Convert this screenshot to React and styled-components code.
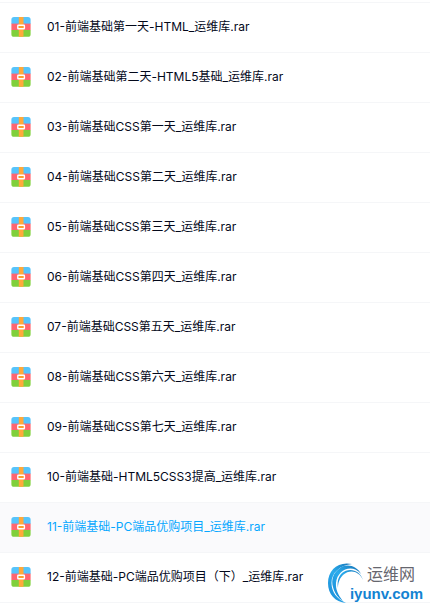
import React from "react";
import styled, { createGlobalStyle } from "styled-components";

const GlobalStyle = createGlobalStyle`
  body {
    margin: 0;
    background: #fff;
    font-family: Inter, "Noto Sans CJK SC", sans-serif;
  }
`;

const Page = styled.main`
  position: relative;
  padding: 2px 0 7px;
`;

const FileList = styled.ul`
  margin: 0;
  padding: 0;
  list-style: none;
  border-top: 1px solid #f5f6f8;
`;

const FileRow = styled.li`
  display: flex;
  align-items: center;
  gap: 15px;
  height: 50px;
  padding: 0 10px 2px;
  box-sizing: border-box;
  border-bottom: 1px solid #f5f6f8;
  background: ${(props) => (props.$active ? "#fafafc" : "#fff")};
`;

const FileLink = styled.a`
  font-size: 12px;
  line-height: 18px;
  font-weight: 400;
  white-space: nowrap;
  text-decoration: none;
  color: ${(props) => (props.$active ? "#06a7ff" : "#03081a")};
`;

const RarSvg = styled.svg`
  display: block;
  flex: none;
`;

const SiteLogo = styled.a`
  position: absolute;
  right: 7px;
  bottom: 6px;
  display: flex;
  text-decoration: none;
`;

const LogoText = styled.span`
  display: flex;
  flex-direction: column;
  margin-left: -15px;
`;

const LogoName = styled.span`
  padding-left: 17px;
  font-size: 16px;
  line-height: 24px;
  color: #66666e;
`;

const LogoDomain = styled.span`
  font-family: "Liberation Sans", sans-serif;
  font-size: 15px;
  line-height: 16px;
  font-weight: 700;
  color: #1383d2;
`;

const files = [
  "01-前端基础第一天-HTML_运维库.rar",
  "02-前端基础第二天-HTML5基础_运维库.rar",
  "03-前端基础CSS第一天_运维库.rar",
  "04-前端基础CSS第二天_运维库.rar",
  "05-前端基础CSS第三天_运维库.rar",
  "06-前端基础CSS第四天_运维库.rar",
  "07-前端基础CSS第五天_运维库.rar",
  "08-前端基础CSS第六天_运维库.rar",
  "09-前端基础CSS第七天_运维库.rar",
  "10-前端基础-HTML5CSS3提高_运维库.rar",
  "11-前端基础-PC端品优购项目_运维库.rar",
  "12-前端基础-PC端品优购项目（下）_运维库.rar",
];

const RarIcon = () => (
  <RarSvg width="22" height="22" viewBox="0 0 22 22" aria-hidden="true">
    <path d="M4 1h14a2.6 2.6 0 0 1 2.6 2.6V8H1.4V3.6A2.6 2.6 0 0 1 4 1z" fill="#56c4fb" />
    <path d="M1.4 7.6h19.2v6.6H1.4z" fill="#ff6670" />
    <path d="M1.4 14h19.2v4.2a2.6 2.6 0 0 1-2.6 2.6H4a2.6 2.6 0 0 1-2.6-2.6z" fill="#7fd03b" />
    <path d="M8.8 1h4.7v19.8H8.8z" fill="#ffa93a" />
    <rect x="7.8" y="9.2" width="6.6" height="3.6" rx="0.5" fill="#ffa02b" stroke="#fff" strokeWidth="1.4" />
  </RarSvg>
);

const SwirlIcon = () => (
  <svg width="38" height="42" viewBox="0 0 38 42" aria-hidden="true">
    <defs>
      <linearGradient id="swirl" x1="0" y1="1" x2="1" y2="0">
        <stop offset="0" stopColor="#1787d4" />
        <stop offset="0.5" stopColor="#2aabec" />
        <stop offset="1" stopColor="#1672b5" />
      </linearGradient>
    </defs>
    <path d="M25 2C11-1 1 8 1 21c0 11 7 19 18 20C10 37 4.500 30 4.500 21 4.500 11 13 3 25 2z" fill="url(#swirl)" />
    <path d="M34 12C30 4 20 1 13 6 6 11 4 18 6 25c1.500 6 5 11 10 14-5-6-7.500-12-7-18C10 8 25 1 34 12z" fill="url(#swirl)" />
    <path d="M36 18C33 8 22 5 15 11c-4 4-5 9-4 15 0-6 2-10 5-13C23 7 32 9 36 18z" fill="url(#swirl)" />
  </svg>
);

const App = () => {
  const activeIndex = 10;

  return (
    <>
      <GlobalStyle />
      <Page>
        <FileList>
          {files.map((name, index) => (
            <FileRow key={name} $active={index === activeIndex}>
              <RarIcon />
              <FileLink href="#" $active={index === activeIndex}>
                {name}
              </FileLink>
            </FileRow>
          ))}
        </FileList>
        <SiteLogo href="#">
          <SwirlIcon />
          <LogoText>
            <LogoName>运维网</LogoName>
            <LogoDomain>iyunv.com</LogoDomain>
          </LogoText>
        </SiteLogo>
      </Page>
    </>
  );
};

export default App;
